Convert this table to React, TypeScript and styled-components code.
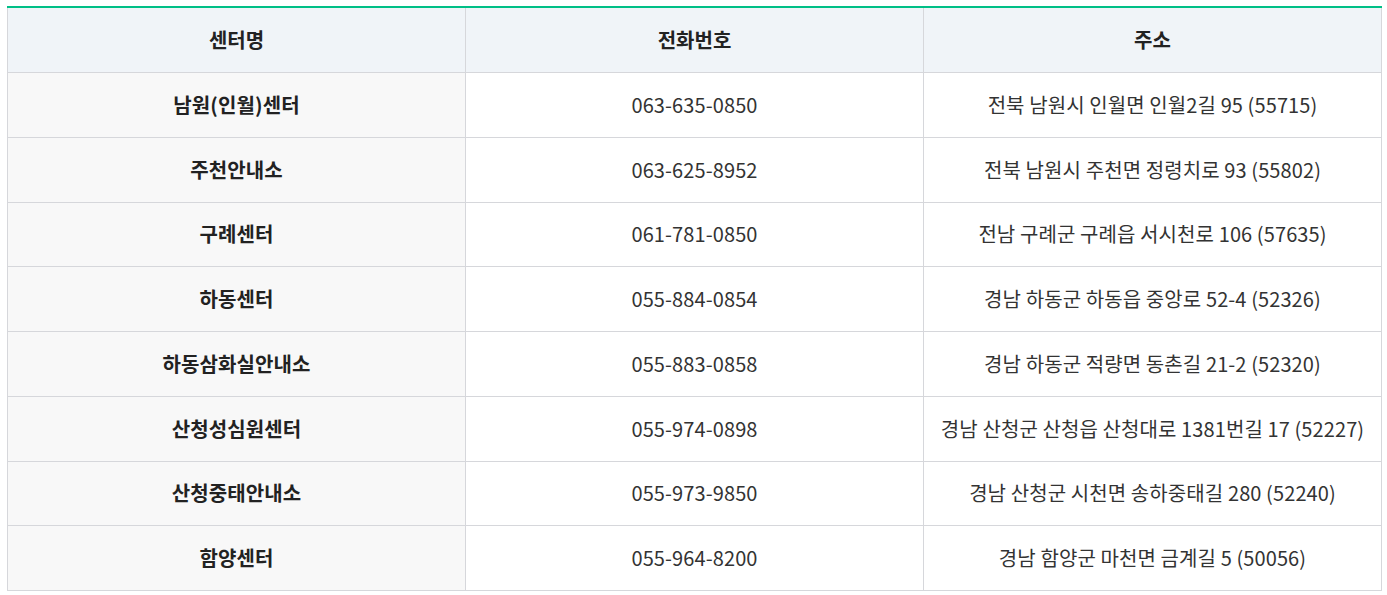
import React from "react";
import styled, { createGlobalStyle } from "styled-components";

const Global = createGlobalStyle`
  html, body { margin: 0; padding: 0; background: #ffffff; }
  body { font-family: "Noto Sans CJK KR", "Noto Sans", sans-serif; }
`;

const Wrap = styled.div`
  padding: 6px 0 0 7px;
  width: 1375px;
`;

const Table = styled.table`
  width: 100%;
  border-collapse: collapse;
  table-layout: fixed;
  border-top: 2px solid #00bf86;
`;

const HeadCell = styled.th`
  height: 64px;
  padding: 0;
  background: #f0f4f8;
  border: 1px solid #d6d7db;
  border-top: none;
  font-size: 20px;
  line-height: 28px;
  font-weight: 700;
  color: #222;
  text-align: center;
  vertical-align: middle;
`;

const Cell = styled.td<{ $name?: boolean }>`
  height: 63.75px;
  padding: 0;
  border: 1px solid #d6d7db;
  background: ${(p) => (p.$name ? "#f8f8f8" : "#ffffff")};
  font-size: 20px;
  line-height: 28px;
  font-weight: ${(p) => (p.$name ? 700 : 400)};
  color: ${(p) => (p.$name ? "#222" : "#333")};
  text-align: center;
  vertical-align: middle;
  letter-spacing: 0.1px;
`;

const rows = [
  ["남원(인월)센터", "063-635-0850", "전북 남원시 인월면 인월2길 95 (55715)"],
  ["주천안내소", "063-625-8952", "전북 남원시 주천면 정령치로 93 (55802)"],
  ["구례센터", "061-781-0850", "전남 구례군 구례읍 서시천로 106 (57635)"],
  ["하동센터", "055-884-0854", "경남 하동군 하동읍 중앙로 52-4 (52326)"],
  ["하동삼화실안내소", "055-883-0858", "경남 하동군 적량면 동촌길 21-2 (52320)"],
  ["산청성심원센터", "055-974-0898", "경남 산청군 산청읍 산청대로 1381번길 17 (52227)"],
  ["산청중태안내소", "055-973-9850", "경남 산청군 시천면 송하중태길 280 (52240)"],
  ["함양센터", "055-964-8200", "경남 함양군 마천면 금계길 5 (50056)"],
];

export default function App() {
  return (
    <>
      <Global />
      <Wrap>
        <Table>
          <thead>
            <tr>
              <HeadCell>센터명</HeadCell>
              <HeadCell>전화번호</HeadCell>
              <HeadCell>주소</HeadCell>
            </tr>
          </thead>
          <tbody>
            {rows.map((r) => (
              <tr key={r[0]}>
                <Cell $name>{r[0]}</Cell>
                <Cell>{r[1]}</Cell>
                <Cell>{r[2]}</Cell>
              </tr>
            ))}
          </tbody>
        </Table>
      </Wrap>
    </>
  );
}
